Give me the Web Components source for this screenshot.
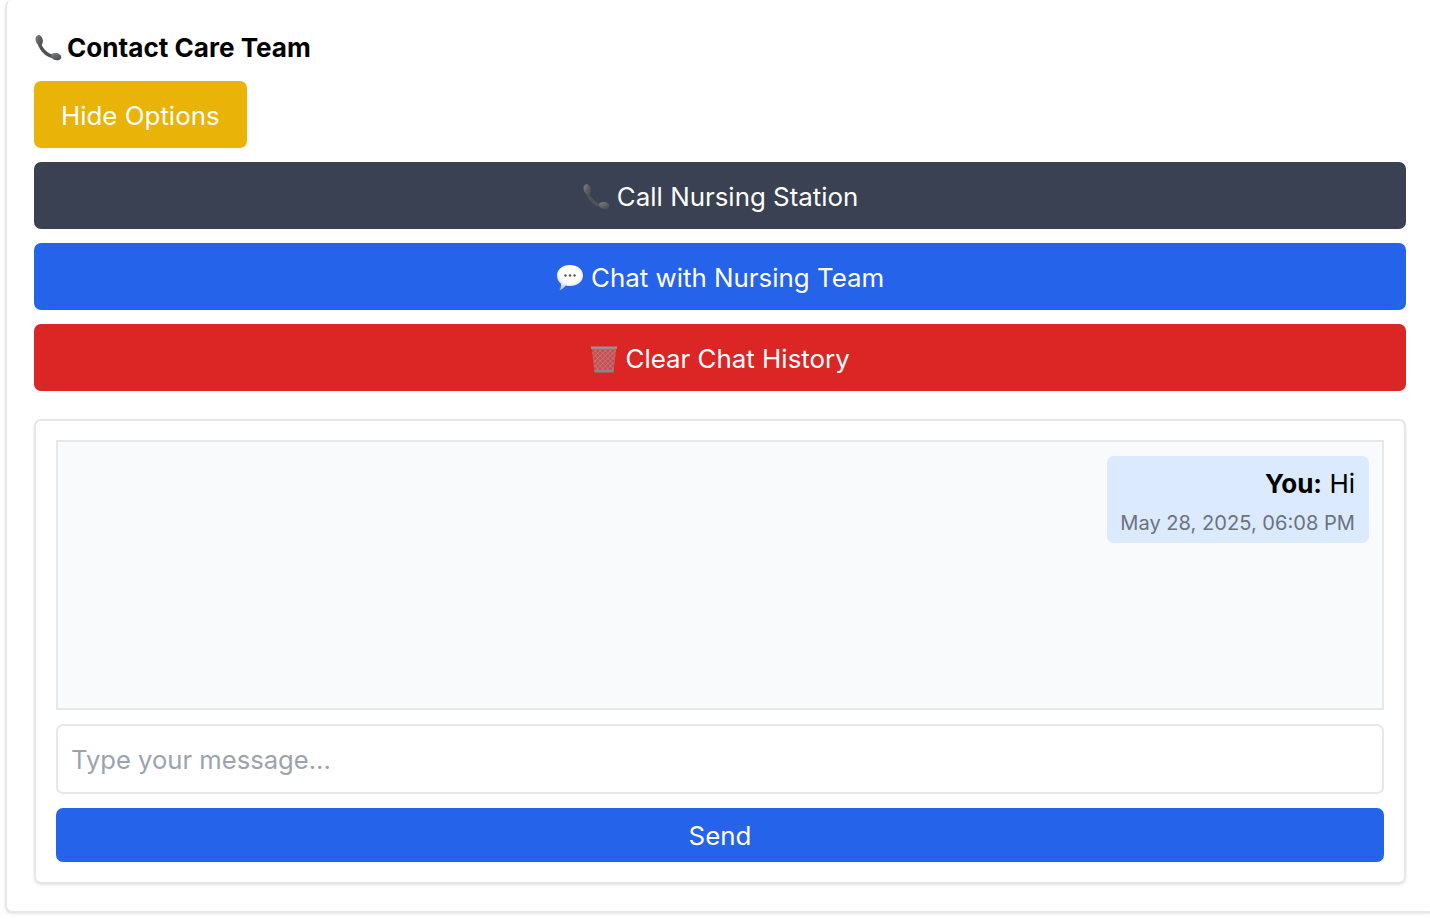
<!DOCTYPE html>
<html lang="en">
<head>
<meta charset="utf-8">
<title>Contact Care Team</title>
<style>
  html, body { margin: 0; height: 100%; overflow: hidden; background: #fff; }
  body { font-family: Inter, "Liberation Sans", sans-serif; }
</style>
</head>
<body>
<care-panel>
  <care-icon slot="icon" name="phone"></care-icon>
  <span slot="title">Contact Care Team</span>
  <care-button color="yellow" inline>Hide Options</care-button>
  <care-button color="slate"><care-icon name="phone"></care-icon> Call Nursing Station</care-button>
  <care-button color="blue"><care-icon name="chat"></care-icon> Chat with Nursing Team</care-button>
  <care-button color="red"><care-icon name="trash"></care-icon> Clear Chat History</care-button>
  <chat-box>
    <chat-message sender="You" time="May 28, 2025, 06:08 PM">Hi</chat-message>
  </chat-box>
</care-panel>

<script>
// icons are drawn here because there is no emoji font to rely on
const ICONS = {
  phone: `
    <svg viewBox="0 0 28 28" width="28" height="28">
      <defs>
        <linearGradient id="ph" x1="0" y1="0" x2="1" y2="1">
          <stop offset="0" stop-color="#808286"/>
          <stop offset="1" stop-color="#414246"/>
        </linearGradient>
      </defs>
      <path d="M5 6C5 13 11 22 22 23" fill="none" stroke="#505156" stroke-width="3.4"/>
      <ellipse cx="5.2" cy="6.2" rx="3.6" ry="5.2" transform="rotate(-14 5.2 6.2)" fill="url(#ph)"/>
      <ellipse cx="22.2" cy="22.6" rx="5.2" ry="3.6" transform="rotate(14 22.2 22.6)" fill="url(#ph)"/>
    </svg>`,
  chat: `
    <svg viewBox="0 0 28 28" width="28" height="28">
      <defs>
        <radialGradient id="bb" cx="0.5" cy="0.35" r="0.7">
          <stop offset="0.55" stop-color="#ffffff"/>
          <stop offset="1" stop-color="#b9bcc4"/>
        </radialGradient>
      </defs>
      <path d="M14 1C21.500 1 27 5.500 27 11.500S21.500 22 14 22C12.500 22 11 21.800 9.700 21.400C8.300 23.500 6.300 25.300 3.500 26C4.700 24 5.200 22 5 19.800C2.600 18 1 15 1 11.500C1 5.500 6.500 1 14 1Z" fill="url(#bb)"/>
      <circle cx="9.500" cy="11.500" r="1.200" fill="#55565a"/>
      <circle cx="14" cy="11.500" r="1.200" fill="#55565a"/>
      <circle cx="18.500" cy="11.500" r="1.200" fill="#55565a"/>
    </svg>`,
  trash: `
    <svg viewBox="0 0 28 28" width="28" height="28">
      <defs>
        <pattern id="mesh" width="3.600" height="3.600" patternUnits="userSpaceOnUse" patternTransform="rotate(45)">
          <rect width="3.600" height="3.600" fill="#d0484c"/>
          <path d="M0 0H3.600M0 0V3.600" stroke="#a89a9c" stroke-width="1"/>
        </pattern>
      </defs>
      <path d="M1.500 2H26.500L23.500 27H4.500Z" fill="url(#mesh)"/>
      <path d="M1 1.500H27V3.800H1Z" fill="#93959a"/>
      <path d="M4.300 25H23.700L23.400 27.500H4.600Z" fill="#85878c"/>
    </svg>`
};

class CareIcon extends HTMLElement {
  constructor() {
    super();
    this.attachShadow({ mode: 'open' });
  }

  connectedCallback() {
    this.shadowRoot.innerHTML = `
      <style>
        :host { display: inline-block; width: 28px; height: 28px; flex: none; vertical-align: -5px; }
        svg { display: block; }
      </style>
      ${ICONS[this.getAttribute('name')] || ''}
    `;
  }
}

const panelTemplate = document.createElement('template');
panelTemplate.innerHTML = `
  <style>
    :host {
      display: flex;
      flex-direction: column;
      gap: 14px;
      box-sizing: border-box;
      width: 1430px;
      height: 913px;
      margin-left: 5px;
      padding: 28px 29px 0 27px;
      background: #fff;
      border: 0 solid #e5e7eb;
      border-width: 0 0 2px 2px;
      border-radius: 7px;
      box-shadow: 0 1px 3px rgba(0, 0, 0, 0.1);
    }

    h2 {
      display: flex;
      align-items: center;
      gap: 5px;
      height: 39px;
      margin: 0;
      font-size: 26.1px;
      font-weight: 700;
      color: #000;
    }

    ::slotted(chat-box) { margin-top: 14px; }
  </style>
  <h2><slot name="icon"></slot><slot name="title"></slot></h2>
  <slot></slot>
`;

class CarePanel extends HTMLElement {
  constructor() {
    super();
    this.attachShadow({ mode: 'open' });
    this.shadowRoot.appendChild(panelTemplate.content.cloneNode(true));
  }
}

const buttonTemplate = document.createElement('template');
buttonTemplate.innerHTML = `
  <style>
    :host { display: block; }
    :host([inline]) { align-self: flex-start; }

    button {
      display: block;
      width: 100%;
      height: 67px;
      padding: 2px 27px 0;
      border: 0;
      border-radius: 7px;
      background: var(--bg);
      color: #fff;
      font: 400 25.9px/1 Inter, "Liberation Sans", sans-serif;
      white-space: nowrap;
      cursor: pointer;
    }

    :host([color="yellow"]) { --bg: #eab308; }
    :host([color="slate"]) { --bg: #394152; }
    :host([color="blue"]) { --bg: #2563eb; }
    :host([color="red"]) { --bg: #dc2626; }
    :host([short]) button { height: 54px; }
  </style>
  <button type="button"><slot></slot></button>
`;

class CareButton extends HTMLElement {
  constructor() {
    super();
    this.attachShadow({ mode: 'open' });
    this.shadowRoot.appendChild(buttonTemplate.content.cloneNode(true));
  }
}

const chatTemplate = document.createElement('template');
chatTemplate.innerHTML = `
  <style>
    :host {
      display: flex;
      flex-direction: column;
      gap: 14px;
      box-sizing: border-box;
      height: 465px;
      padding: 19px 20px 20px;
      background: #fff;
      border: 2px solid #e5e7eb;
      border-radius: 7px;
      box-shadow: 0 1px 3px rgba(0, 0, 0, 0.1);
    }

    .messages {
      display: flex;
      flex-direction: column;
      align-items: flex-end;
      box-sizing: border-box;
      height: 271px;
      padding: 14px 13px 14px 14px;
      background: #f9fafb;
      border: 2px solid #e5e7eb;
    }

    input {
      display: block;
      box-sizing: border-box;
      width: 100%;
      height: 70px;
      padding: 0 13px;
      border: 2px solid #e5e7eb;
      border-radius: 7px;
      outline: none;
      background: #fff;
      font: 400 25.6px Inter, "Liberation Sans", sans-serif;
    }

    input::placeholder { color: #9ca3af; opacity: 1; }
  </style>
  <div class="messages"><slot></slot></div>
  <input type="text" placeholder="Type your message...">
  <care-button color="blue" short>Send</care-button>
`;

class ChatBox extends HTMLElement {
  constructor() {
    super();
    this.attachShadow({ mode: 'open' });
    this.shadowRoot.appendChild(chatTemplate.content.cloneNode(true));
  }
}

const messageTemplate = document.createElement('template');
messageTemplate.innerHTML = `
  <style>
    :host {
      display: block;
      box-sizing: border-box;
      height: 87px;
      padding: 10px 14px 0 13px;
      background: #dbeafe;
      border-radius: 7px;
      text-align: right;
      color: #000;
    }

    .text { font-size: 26px; line-height: 36px; }
    .sender { font-weight: 700; }
    .time { margin-top: 8px; font-size: 20.1px; line-height: 26px; color: #6b7280; }
  </style>
  <div class="text"><span class="sender"></span> <slot></slot></div>
  <div class="time"></div>
`;

class ChatMessage extends HTMLElement {
  constructor() {
    super();
    this.attachShadow({ mode: 'open' });
    this.shadowRoot.appendChild(messageTemplate.content.cloneNode(true));
  }

  connectedCallback() {
    this.shadowRoot.querySelector('.sender').textContent = `${this.getAttribute('sender')}:`;
    this.shadowRoot.querySelector('.time').textContent = this.getAttribute('time');
  }
}

customElements.define('care-icon', CareIcon);
customElements.define('care-button', CareButton);
customElements.define('chat-message', ChatMessage);
customElements.define('chat-box', ChatBox);
customElements.define('care-panel', CarePanel);
</script>
</body>
</html>
